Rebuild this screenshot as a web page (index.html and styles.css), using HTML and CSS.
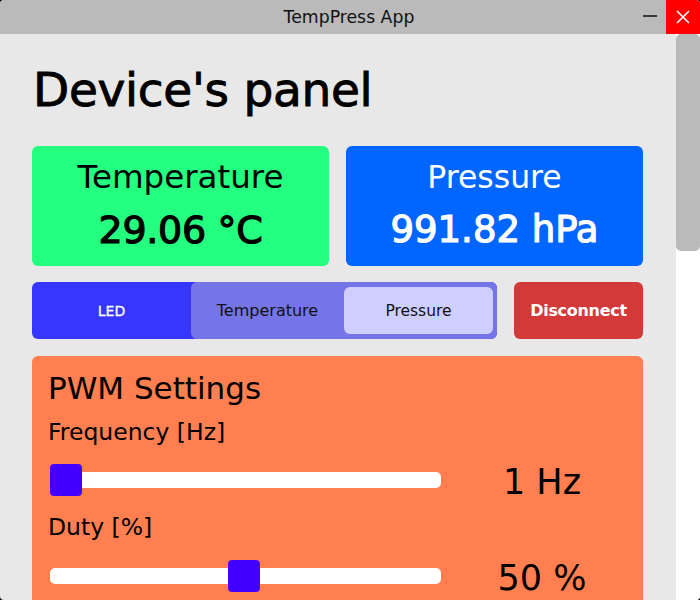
FILE: index.html
```html
<!DOCTYPE html>
<html lang="en">
<head>
<meta charset="utf-8">
<title>TempPress App</title>
<link rel="stylesheet" href="styles.css">
</head>
<body>
<div class="window">
  <header class="titlebar">
    <span class="title">TempPress App</span>
    <div class="win-controls">
      <span class="minimize"></span>
      <span class="close">
        <svg width="14" height="14" viewBox="0 0 14 14"><path d="M1 1 L13 13 M13 1 L1 13" stroke="#fff" stroke-width="1.6" fill="none"/></svg>
      </span>
    </div>
  </header>
  <div class="main">
    <div class="content">
      <h1 class="heading">Device's panel</h1>
      <div class="cards">
        <div class="card card-temp">
          <div class="card-label">Temperature</div>
          <div class="card-value">29.06 °C</div>
        </div>
        <div class="card card-press">
          <div class="card-label">Pressure</div>
          <div class="card-value">991.82 hPa</div>
        </div>
      </div>
      <div class="controls">
        <div class="segmented">
          <div class="seg seg-led">LED</div>
          <div class="seg-rest">
            <div class="seg seg-temp">Temperature</div>
            <div class="seg seg-press">Pressure</div>
          </div>
        </div>
        <button class="disconnect">Disconnect</button>
      </div>
      <section class="pwm">
        <h2 class="pwm-title">PWM Settings</h2>
        <div class="field-label label-freq">Frequency [Hz]</div>
        <div class="slider-row row-freq">
          <div class="slider">
            <div class="track"></div>
            <div class="thumb" style="left: 0px"></div>
          </div>
          <div class="value">1 Hz</div>
        </div>
        <div class="field-label label-duty">Duty [%]</div>
        <div class="slider-row row-duty">
          <div class="slider">
            <div class="track"></div>
            <div class="thumb" style="left: 178px"></div>
          </div>
          <div class="value">50 %</div>
        </div>
      </section>
    </div>
    <div class="scrollbar"><div class="scroll-thumb"></div></div>
  </div>
</div>
</body>
</html>
```
FILE: styles.css
```css
html, body {
  margin: 0;
  padding: 0;
  background: #000;
  width: 700px;
  height: 600px;
  overflow: hidden;
}

.window {
  width: 700px;
  height: 600px;
  display: flex;
  flex-direction: column;
  border-radius: 4px;
  overflow: hidden;
  background: #e8e8e8;
  font-family: "DejaVu Sans", sans-serif;
  color: #000;
}

.titlebar {
  height: 34px;
  flex: none;
  background: #bababa;
  position: relative;
  display: flex;
  align-items: center;
  justify-content: center;
}

.title {
  font-size: 17.3px;
  color: #111;
  margin-left: -2px;
}

.win-controls {
  position: absolute;
  right: 0;
  top: 0;
  height: 34px;
  display: flex;
  align-items: center;
}

.minimize {
  width: 14px;
  height: 2px;
  background: #3a3a3a;
  margin-right: 9px;
  margin-top: -3px;
}

.close {
  width: 34px;
  height: 34px;
  background: #ff0000;
  display: flex;
  align-items: center;
  justify-content: center;
}

.main {
  flex: 1;
  display: flex;
  min-height: 0;
}

.content {
  flex: 1;
  padding: 0 33px 0 32px;
  overflow: hidden;
}

.scrollbar {
  width: 24px;
  flex: none;
  background: #fff;
}

.scroll-thumb {
  height: 217px;
  background: #bababa;
  border-radius: 5px;
}

.heading {
  margin: 28px 0 0 1px;
  font-size: 47px;
  line-height: 55px;
  font-weight: 400;
  -webkit-text-stroke: 0.9px #000;
  letter-spacing: -0.3px;
}

.cards {
  margin-top: 29px;
  display: grid;
  grid-template-columns: 1fr 1fr;
  gap: 17px;
}

.card {
  height: 120px;
  box-sizing: border-box;
  border-radius: 6px;
  padding-top: 12px;
  display: flex;
  flex-direction: column;
  align-items: center;
  gap: 12px;
}

.card-temp {
  background: #24ff80;
  color: #000;
}

.card-press {
  background: #0066ff;
  color: #fff;
}

.card-label {
  font-size: 32.5px;
  line-height: 38px;
}

.card-press .card-label {
  font-size: 31.5px;
}

.card-value {
  font-size: 37px;
  line-height: 44px;
  -webkit-text-stroke: 1.2px currentColor;
}

.card-temp .card-value {
  font-size: 38px;
  letter-spacing: -0.3px;
}

.controls {
  margin-top: 16px;
  display: flex;
  gap: 17px;
  height: 57px;
}

.segmented {
  width: 465px;
  display: flex;
  background: #3636ff;
  border-radius: 6px;
  overflow: hidden;
}

.seg {
  display: flex;
  align-items: center;
  justify-content: center;
  font-size: 16px;
}

.seg-led {
  width: 159px;
  flex: none;
  color: #fff;
  font-size: 14px;
  -webkit-text-stroke: 0.3px #fff;
}

.seg-rest {
  flex: 1;
  display: flex;
  background: #7575e8;
  border-radius: 6px;
  padding: 5px 4px 5px 0;
}

.seg-temp {
  flex: 1;
  color: #111;
}

.seg-press {
  width: 149px;
  flex: none;
  background: #cfcfff;
  border-radius: 6px;
  color: #111;
  font-size: 15.5px;
}

.disconnect {
  flex: 1;
  border: none;
  border-radius: 6px;
  background: #d33939;
  color: #fff;
  font-family: "DejaVu Sans", sans-serif;
  font-size: 16px;
  font-weight: 700;
  padding: 0;
  letter-spacing: -0.3px;
}

.pwm {
  margin-top: 17px;
  background: #ff7f50;
  border-radius: 6px 6px 0 0;
  padding: 14px 0 20px 16px;
  height: 260px;
  box-sizing: border-box;
}

.pwm-title {
  margin: 0;
  font-size: 31px;
  line-height: 36px;
  font-weight: 400;
}

.field-label {
  font-size: 23.5px;
  line-height: 28px;
}

.label-freq {
  margin-top: 12px;
}

.label-duty {
  margin-top: 17px;
}

.slider-row {
  display: grid;
  grid-template-columns: 391px 1fr;
  height: 32px;
  margin-left: 2px;
}

.row-freq {
  margin-top: 18px;
}

.row-duty {
  margin-top: 19px;
}

.slider {
  position: relative;
  height: 32px;
  display: flex;
  align-items: center;
}

.track {
  width: 100%;
  height: 16px;
  background: #fff;
  border-radius: 5px;
}

.thumb {
  position: absolute;
  top: 0;
  width: 32px;
  height: 32px;
  background: #4400ff;
  border-radius: 4px;
}

.value {
  text-align: center;
  font-size: 35px;
  line-height: 32px;
  margin-top: 2px;
  white-space: nowrap;
}
```
